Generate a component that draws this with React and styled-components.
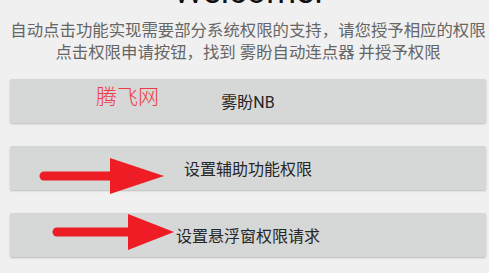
import React from 'react';
import styled, { createGlobalStyle } from 'styled-components';

const GlobalStyle = createGlobalStyle`
  html, body {
    margin: 0;
    padding: 0;
    background: #f0f0f0;
    overflow: hidden;
  }
  body {
    font-family: Roboto, "Noto Sans CJK SC", sans-serif;
  }
`;

const PAGE = styled.div`
  position: relative;
  width: 489px;
  height: 273px;
  overflow: hidden;
  box-sizing: border-box;
  padding: 0 3px 0 10px;
  display: flex;
  flex-direction: column;
`;

const TITLE = styled.h1`
  margin: -29px 0 0 0;
  font-size: 34px;
  line-height: 40px;
  font-weight: 400;
  color: #111;
  text-align: center;
`;

const DESC = styled.p`
  margin: 9px 0 0 0;
  font-family: Roboto, "Noto Sans CJK SC", sans-serif;
  font-size: 16.4px;
  line-height: 22px;
  color: #666;
  text-align: center;
  white-space: nowrap;
`;

const BUTTONS = styled.div`
  margin-top: 15px;
  display: flex;
  flex-direction: column;
  gap: 23px;
`;

const BUTTON = styled.button`
  height: 44px;
  border: none;
  border-radius: 2px;
  background: #d6d7d7;
  box-shadow: 0 1px 2px rgba(0, 0, 0, 0.22);
  font-family: Roboto, "Noto Sans CJK SC", sans-serif;
  font-size: 16px;
  color: #262626;
  padding: 0;
  cursor: pointer;
`;

const WATERMARK = styled.div`
  position: absolute;
  left: 96px;
  top: 81px;
  font-family: "Noto Sans CJK SC", sans-serif;
  font-weight: 300;
  font-size: 21px;
  line-height: 28px;
  color: #ef3b45;
`;

const ARROWS = styled.svg`
  position: absolute;
  left: 0;
  top: 0;
  pointer-events: none;
`;

const Arrow = ({ x1, x2, y, tip, half }) => (
    <g fill="#ee1c25" stroke="#ee1c25">
        <line x1={x1} y1={y} x2={x2 + 4} y2={y} strokeWidth="9" strokeLinecap="round" />
        <polygon points={`${x2},${y - half} ${tip},${y} ${x2},${y + half}`} stroke="none" />
    </g>
);

const App = () => {
    return (<>
        <GlobalStyle />
        <PAGE>
            <TITLE>Welcome!</TITLE>
            <DESC>
                自动点击功能实现需要部分系统权限的支持，请您授予相应的权限
                <br />
                点击权限申请按钮，找到 雾盼自动连点器 并授予权限
            </DESC>
            <BUTTONS>
                <BUTTON>雾盼NB</BUTTON>
                <BUTTON>设置辅助功能权限</BUTTON>
                <BUTTON>设置悬浮窗权限请求</BUTTON>
            </BUTTONS>
            <WATERMARK>腾飞网</WATERMARK>
            <ARROWS width="489" height="273" viewBox="0 0 489 273">
                <Arrow x1={44} x2={110} y={176} tip={164} half={18} />
                <Arrow x1={57} x2={128} y={232} tip={174} half={18} />
            </ARROWS>
        </PAGE>
    </>);
};

export default App;
